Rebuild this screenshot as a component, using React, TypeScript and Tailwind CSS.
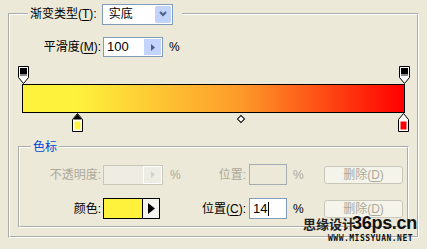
import React from "react";

const FONT = { fontFamily: '"Liberation Sans", "Noto Sans CJK SC", sans-serif' };

function U({ c }: { c: string }) {
  return <span className="underline underline-offset-[2px]">{c}</span>;
}

function TopStop({ left }: { left: number }) {
  return (
    <svg width="11" height="18" viewBox="0 0 11 18" className="absolute top-0" style={{ left }}>
      <path d="M0.5 0.5H10.5V11.5L5.5 17.5L0.5 11.5Z" fill="#ffffff" stroke="#000" />
      <rect x="2" y="2" width="7" height="6" fill="#000" />
      <rect x="2" y="8" width="7" height="2" fill="#8a8a8a" />
    </svg>
  );
}

function BottomStop({ left, color, selected }: { left: number; color: string; selected?: boolean }) {
  return (
    <svg width="11" height="19" viewBox="0 0 11 19" className="absolute bottom-0" style={{ left }}>
      <path d="M5.5 0.5L10.5 6.5V18.5H0.5V6.5Z" fill="#ffffff" stroke="#000" />
      {selected && <path d="M5.5 1L10 6.5H1Z" fill="#000" />}
      <rect x="2.5" y="8.5" width="6" height="8" fill={color} />
    </svg>
  );
}

function Spin({ value, disabled }: { value: string; disabled?: boolean }) {
  return (
    <div
      className={`flex h-[20px] w-[60px] border ${
        disabled ? "border-[#c9c7ba] bg-[#efede3]" : "border-[#7f9db9] bg-white"
      }`}
    >
      <div className="flex-1 pl-[3px] text-[13px] leading-[18px]">{value}</div>
      <div
        className={`flex w-[19px] items-center justify-center border border-white ${
          disabled ? "bg-[#eeede5]" : "bg-[#c4d4fc]"
        }`}
      >
        <svg width="4" height="7" viewBox="0 0 4 7">
          <path d="M0 0L4 3.5L0 7Z" fill={disabled ? "#d4d2c8" : "#4d6185"} />
        </svg>
      </div>
    </div>
  );
}

function DelBtn() {
  return (
    <div className="flex h-[18px] w-[79px] items-center justify-center rounded-[3px] border border-[#c9c7ba] bg-[#f5f4ea] text-[12px] text-[#aca899]">
      删除(<U c="D" />)
    </div>
  );
}

export default function App() {
  return (
    <div className="relative h-[249px] w-[427px] overflow-hidden bg-[#ece9d8] pl-[8px] pt-[3px] text-black" style={FONT}>
      <fieldset className="h-[235px] w-[411px] border-2 border-white [border-style:groove]">
        <legend className="ml-[18px] px-[2px] pr-[9px]">
          <div className="flex h-[22px] items-center text-[12px]">
            <span>
              渐变类型(<U c="T" />):
            </span>
            <div className="ml-[5px] flex h-[21px] w-[71px] border border-[#7f9db9] bg-white">
              <div className="flex-1 pl-[6px] leading-[19px]">实底</div>
              <div className="m-[1px] flex w-[16px] items-center justify-center rounded-[2px] bg-[#c1d3fb]">
                <svg width="8" height="6" viewBox="0 0 8 6">
                  <path d="M1 1L4 4L7 1" fill="none" stroke="#4d6185" strokeWidth="2" />
                </svg>
              </div>
            </div>
          </div>
        </legend>

        <div className="mt-[12px] flex items-center text-[12px]">
          <div className="w-[91px] text-right">
            平滑度(<U c="M" />):
          </div>
          <div className="ml-[2px]">
            <Spin value="100" />
          </div>
          <div className="ml-[6px]">%</div>
        </div>

        <div className="relative ml-[12px] mt-[9px] w-[383px] pb-[19px] pt-[18px]">
          <TopStop left={-4} />
          <TopStop left={377} />
          <div
            className="h-[29px] w-full border border-black"
            style={{
              background:
                "linear-gradient(to right, #fef23c 0%, #fef23c 14%, #fd9a2a 57%, #ff0000 100%)",
            }}
          />
          <BottomStop left={50} color="#fef23c" selected />
          <BottomStop left={376} color="#ff0000" />
          <div className="absolute left-[216px] top-[50px] h-[6px] w-[6px] rotate-45 border border-black bg-white" />
        </div>

        <fieldset className="ml-[8px] mt-[6px] w-[391px] border-2 border-white pb-[7px] [border-style:groove]">
          <legend className="ml-[11px] px-[2px] text-[12px] text-[#0046d5]">色标</legend>

          <div className="mt-[8px] flex items-center text-[12px]">
            <div className="w-[81px] text-right text-[#aca899]">不透明度:</div>
            <div className="ml-[2px]">
              <Spin value="" disabled />
            </div>
            <div className="flex w-[83px] justify-between text-[#aca899]">
              <span className="pl-[7px]">%</span>
              <span>位置:</span>
            </div>
            <div className="ml-[3px] h-[21px] w-[38px] border border-[#a5acb5] bg-[#ece9d8]" />
            <div className="w-[37px] pl-[6px] text-[#aca899]">%</div>
            <DelBtn />
          </div>

          <div className="mt-[13px] flex items-center text-[12px]">
            <div className="w-[81px] text-right">颜色:</div>
            <div className="ml-[2px] flex h-[21px] w-[57px] border border-black">
              <div className="w-[39px] border-r border-black bg-[#fef23c]" />
              <div className="flex flex-1 items-center justify-center bg-[#f4f3ee]">
                <svg width="7" height="11" viewBox="0 0 7 11">
                  <path d="M0 0L7 5.5L0 11Z" fill="#000" />
                </svg>
              </div>
            </div>
            <div className="flex w-[86px] justify-end">
              <span>
                位置(<U c="C" />):
              </span>
            </div>
            <div className="ml-[3px] flex h-[21px] w-[38px] items-center border border-[#7f9db9] bg-white pl-[3px] text-[13px]">
              14<span className="ml-[1px] inline-block h-[14px] w-[1px] bg-black" />
            </div>
            <div className="w-[37px] pl-[6px]">%</div>
            <DelBtn />
          </div>
        </fieldset>
      </fieldset>

      <div className="absolute left-[303px] top-[213px] flex items-end whitespace-nowrap">
        <span
          className="text-[13px] font-bold leading-[18px] text-[#222]"
          style={{ fontFamily: '"Noto Sans CJK SC", sans-serif' }}
        >
          思缘设计
        </span>
        <span
          className="-ml-[3px] text-[18px] font-bold leading-[20px] tracking-[-0.3px] text-[#111]"
          style={{ fontFamily: '"Liberation Sans", sans-serif' }}
        >
          36ps.cn
        </span>
      </div>
      <div
        className="absolute left-[328px] top-[235px] whitespace-nowrap text-[8px] font-bold leading-[8px] tracking-[0.5px] text-[#111]"
        style={{ fontFamily: '"DejaVu Sans Mono", monospace' }}
      >
        WWW.MISSYUAN.NET
      </div>
    </div>
  );
}
